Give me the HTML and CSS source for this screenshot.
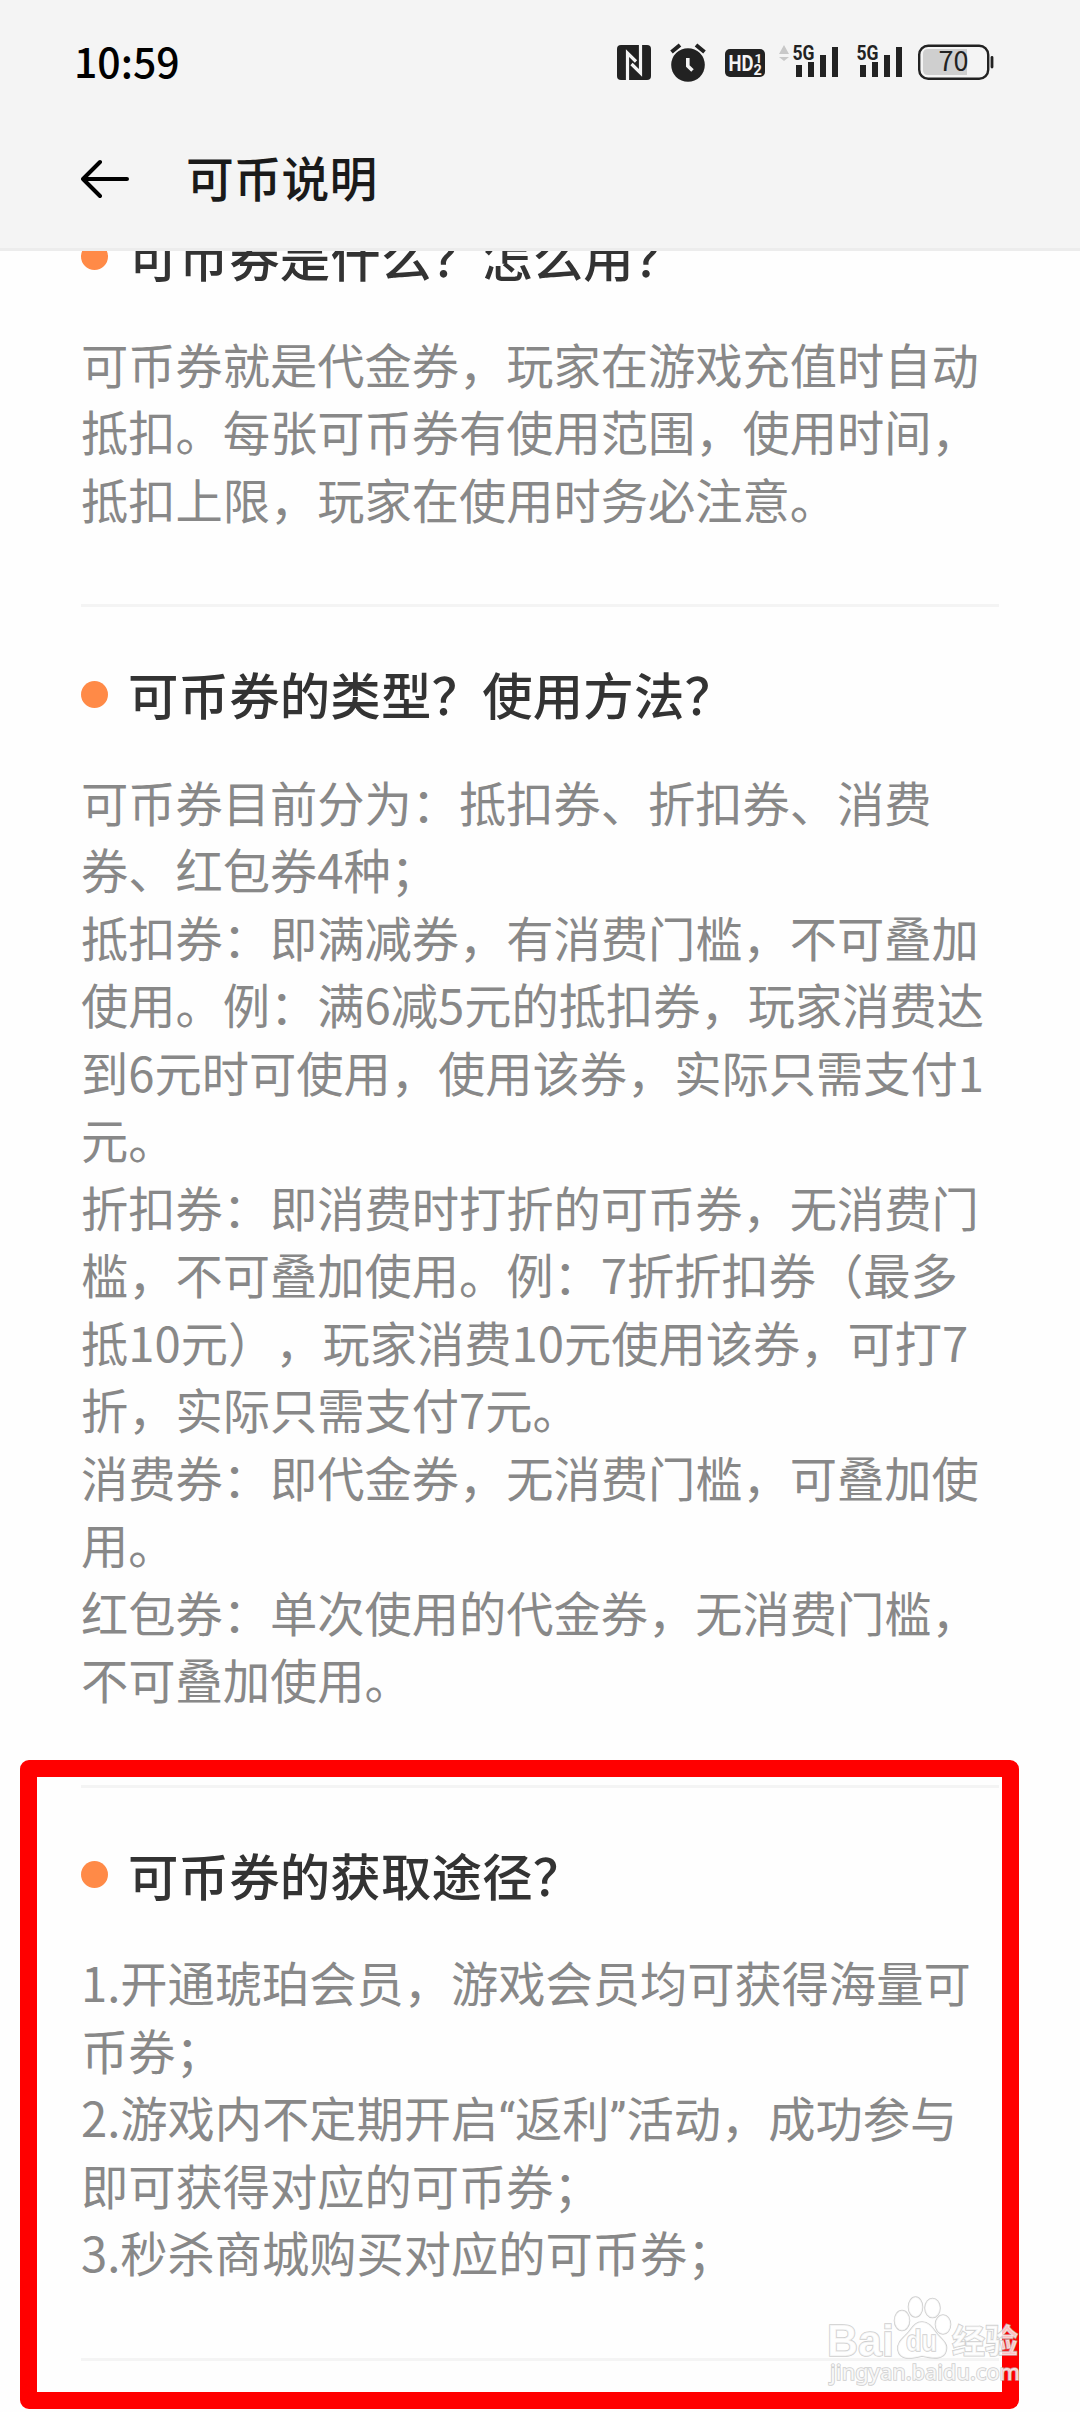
FILE: index.html
```html
<!DOCTYPE html>
<html lang="zh-CN">
<head>
  <meta charset="UTF-8" />
  <meta name="viewport" content="width=device-width, initial-scale=1.0" />
  <title>可币说明</title>
  <link rel="stylesheet" href="styles.css">
</head>
<body>

  <!-- Header -->
  <header>
    <div class="status-bar">
      <span class="time">10:59</span>
      <div class="status-icons">
        <!-- NFC -->
        <svg class="nfc" width="34" height="40" viewBox="0 0 34 40">
          <rect x="0" y="2" width="34" height="35" rx="4" fill="#222"/>
          <path d="M10.500 37V10L19 18.500M23.500 2V30L14.500 21" fill="none" stroke="#f4f4f4" stroke-width="3.200"/>
        </svg>
        <!-- Alarm -->
        <svg class="alarm" width="36" height="40" viewBox="0 0 36 40">
          <circle cx="18" cy="22" r="16.800" fill="#222"/>
          <path d="M1.500 9L10 2M34.500 9L26 2" stroke="#222" stroke-width="4"/>
          <path d="M17.800 15V23L22.500 27.500" fill="none" stroke="#f4f4f4" stroke-width="3.600"/>
        </svg>
        <!-- HD -->
        <svg class="hd" width="40" height="40" viewBox="0 0 40 40">
          <rect x="0" y="6" width="40" height="28" rx="5" fill="#222"/>
          <text x="3.500" y="28" font-size="22" textLength="25" lengthAdjust="spacingAndGlyphs">HD</text>
          <text x="29.500" y="19.500" font-size="13.500">1</text>
          <text x="28.500" y="31.500" font-size="14.500">2</text>
        </svg>
        <!-- Signal 1 -->
        <svg class="signal" width="60" height="40" viewBox="0 0 60 40">
          <path d="M0 11L5 2L10 11ZM0 14H10L5 18Z" fill="#c8c8c8"/>
          <text x="13.500" y="17" font-size="21" textLength="22" lengthAdjust="spacingAndGlyphs">5G</text>
          <path d="M17 22H23V34H17ZM29 19H35V34H29ZM41 12H47V34H41ZM53 4H59V34H53Z" fill="#222"/>
        </svg>
        <!-- Signal 2 -->
        <svg class="signal last" width="48" height="40" viewBox="12 0 48 40">
          <text x="13.500" y="17" font-size="21" textLength="22" lengthAdjust="spacingAndGlyphs">5G</text>
          <path d="M17 22H23V34H17ZM29 19H35V34H29ZM41 12H47V34H41ZM53 4H59V34H53Z" fill="#222"/>
        </svg>
        <!-- Battery -->
        <svg class="battery" width="76" height="40" viewBox="0 0 76 40">
          <rect x="1.200" y="2.700" width="69" height="33" rx="9" fill="none" stroke="#222" stroke-width="2.400"/>
          <path d="M10 6H49V32H10Q5 32 5 27V11Q5 6 10 6Z" fill="#cfcfcf"/>
          <path d="M74 14.500V24" stroke="#222" stroke-width="2.800" stroke-linecap="round"/>
          <text x="20.500" y="28" font-size="27">70</text>
        </svg>
      </div>
    </div>
    <div class="title-bar">
      <svg class="back" width="48" height="40" viewBox="0 0 48 40">
        <path d="M19 3L2 20L19 37M2 20H46" fill="none" stroke="#000" stroke-width="4" stroke-linecap="round" stroke-linejoin="round"/>
      </svg>
      <h1>可币说明</h1>
    </div>
  </header>

  <!-- Content -->
  <main>
    <div class="faq-list">
      <section class="faq">
        <h2>可币券是什么？怎么用？</h2>
        <p>可币券就是代金券，玩家在游戏充值时自动抵扣。每张可币券有使用范围，使用时间，抵扣上限，玩家在使用时务必注意。</p>
      </section>

      <section class="faq">
        <h2>可币券的类型？使用方法？</h2>
        <p>可币券目前分为：抵扣券、折扣券、消费券、红包券4种；</p>
        <p>抵扣券：即满减券，有消费门槛，不可叠加使用。例：满6减5元的抵扣券，玩家消费达到6元时可使用，使用该券，实际只需支付1元。</p>
        <p>折扣券：即消费时打折的可币券，无消费门槛，不可叠加使用。例：7折折扣券（最多抵10元），玩家消费10元使用该券，可打7折，实际只需支付7元。</p>
        <p>消费券：即代金券，无消费门槛，可叠加使用。</p>
        <p>红包券：单次使用的代金券，无消费门槛，不可叠加使用。</p>
      </section>

      <section class="faq">
        <h2>可币券的获取途径？</h2>
        <p>1.开通琥珀会员，游戏会员均可获得海量可币券；</p>
        <p>2.游戏内不定期开启<span class="quote">“</span>返利<span class="quote">”</span>活动，成功参与即可获得对应的可币券；</p>
        <p>3.秒杀商城购买对应的可币券；</p>
      </section>
    </div>
  </main>

  <!-- Red highlight frame -->
  <div class="highlight"></div>

  <!-- Watermark -->
  <svg class="watermark" width="210" height="110" viewBox="0 0 210 110">
    <g class="mark">
      <ellipse cx="82" cy="30.500" rx="7.500" ry="10"/>
      <ellipse cx="95.500" cy="17" rx="7" ry="10"/>
      <ellipse cx="112.500" cy="18" rx="7.500" ry="9.500"/>
      <ellipse cx="123" cy="34.500" rx="7.500" ry="9.500"/>
      <path d="M102 32C110 32 113 39 118 45C124 51 128 55 126 61C124 69 115 69 102 66C90 69 80 70 78 60C77 53 82 49 87 44C92 39 94 32 102 32Z"/>
      <text class="bai" x="7" y="66" textLength="67" lengthAdjust="spacingAndGlyphs">Bai</text>
      <text class="du" x="86" y="61" textLength="31" lengthAdjust="spacingAndGlyphs">du</text>
      <text class="jy" x="132" y="63" textLength="66">经验</text>
      <text class="url" x="10" y="90" textLength="190" lengthAdjust="spacingAndGlyphs">jingyan.baidu.com</text>
    </g>
  </svg>

</body>
</html>
```
FILE: styles.css
```css
* {
  box-sizing: border-box;
}

body {
  position: relative;
  height: 2412px;
  margin: 0;
  overflow: hidden;
  font-family: "Noto Sans CJK SC", sans-serif;
  background-color: #fefefe;
  color: #333;
  text-spacing-trim: space-all;
}

header {
  height: 251px;
  background-color: #f4f4f4;
  border-bottom: 3px solid #ececec;
}

.status-bar {
  display: flex;
  justify-content: space-between;
  align-items: center;
  height: 126px;
  padding: 0 86px 0 74px;
}

.time {
  margin-bottom: 6px;
  font-size: 41px;
  font-weight: 500;
  line-height: 60px;
  color: #000;
}

.status-icons {
  display: flex;
}

.status-icons svg {
  display: block;
  overflow: visible;
}

.status-icons text {
  font-family: Roboto, sans-serif;
  font-weight: 700;
  fill: #222;
}

.alarm,
.hd {
  margin-left: 19px;
}

.status-icons .hd text {
  fill: #f4f4f4;
}

.signal {
  margin-left: 14px;
}

.signal.last {
  margin-left: 16px;
}

.battery {
  margin-left: 15px;
}

.status-icons .battery text {
  font-family: "Noto Sans CJK SC", sans-serif;
  font-weight: 400;
}

.title-bar {
  display: flex;
  align-items: center;
  height: 106px;
  padding-left: 81px;
}

.title-bar h1 {
  margin: 0 0 4px 57px;
  font-size: 47.8px;
  font-weight: 500;
  line-height: 70px;
  color: #1a1a1a;
}

main {
  height: 2161px;
  padding: 0 81px;
  overflow: hidden;
}

/* list is scrolled, the first heading slides under the header */
.faq-list {
  margin-top: -82px;
}

.faq {
  padding: 54px 0 72px;
  border-bottom: 3px solid #f4f4f4;
}

.faq h2 {
  display: flex;
  align-items: center;
  margin: 0 0 40.5px;
  font-size: 50.4px;
  font-weight: 500;
  line-height: 66px;
  letter-spacing: 0.2px;
}

.faq h2::before {
  content: "";
  width: 27px;
  height: 27px;
  margin-right: 20px;
  border-radius: 50%;
  background-color: #ff8a47;
}

.faq p {
  margin: 0;
  font-size: 47.25px;
  line-height: 67.5px;
  color: #888;
}

.faq .quote {
  font-family: Roboto, sans-serif;
  line-height: 1;
}

.highlight {
  position: absolute;
  left: 20px;
  top: 1760px;
  width: 999px;
  height: 649px;
  border: 17.5px solid #ff0000;
  border-radius: 9px;
}

.watermark {
  position: absolute;
  left: 820px;
  top: 2290px;
  overflow: visible;
}

.mark {
  fill: rgba(255, 255, 255, 0.75);
  stroke: rgba(190, 190, 190, 0.75);
  stroke-width: 1.6;
  paint-order: stroke;
}

.mark text {
  font-weight: 700;
}

.bai,
.du {
  font-family: "Liberation Sans", sans-serif;
}

.bai {
  font-size: 44px;
}

.du {
  font-size: 29px;
}

.jy {
  font-size: 33px;
}

.mark .url {
  font-family: "Noto Sans", sans-serif;
  font-size: 22px;
  font-weight: 500;
}
```
